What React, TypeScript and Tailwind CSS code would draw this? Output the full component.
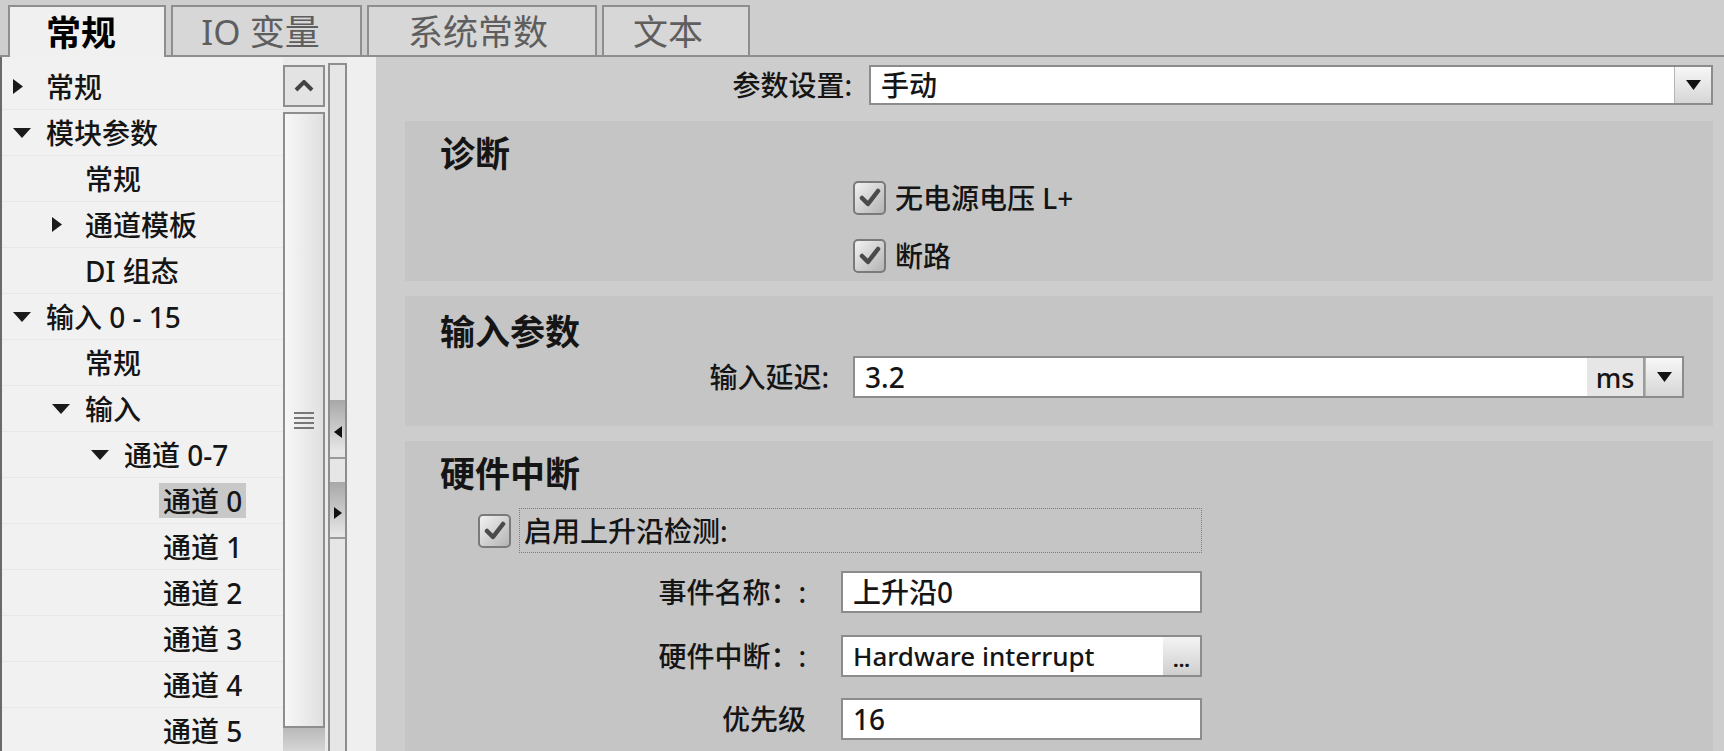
import React from 'react';

const TriDown = () => (
  <svg width="18" height="10" viewBox="0 0 18 10" className="shrink-0">
    <path d="M0 0H18L9 10Z" fill="#1a1a1a" />
  </svg>
);

const TriRight = () => (
  <svg width="10" height="15" viewBox="0 0 10 15" className="shrink-0">
    <path d="M0 0L10 7.5L0 15Z" fill="#1a1a1a" />
  </svg>
);

const Check = () => (
  <div className="w-[33px] h-[34px] rounded-[5px] border-2 border-[#7a7a7a] bg-linear-to-br from-[#f2f2f2] to-[#b4b4b4] flex items-center justify-center shrink-0">
    <svg width="22" height="20" viewBox="0 0 22 20">
      <path d="M3 10 L9 16 L19 3" stroke="#4a4a4a" strokeWidth="4.5" fill="none" strokeLinecap="round" strokeLinejoin="round" />
    </svg>
  </div>
);

const DropBtn = () => (
  <div className="w-[37px] h-full bg-linear-to-b from-[#f7f7f7] to-[#d6d6d6] border-l border-[#b5b5b5] flex items-center justify-center shrink-0">
    <svg width="15" height="10" viewBox="0 0 15 10">
      <path d="M0 0H15L7.5 10Z" fill="#111" />
    </svg>
  </div>
);

type Row = { level: number; arrow?: 'down' | 'right'; text: string; sel?: boolean };

const rows: Row[] = [
  { level: 0, arrow: 'right', text: '常规' },
  { level: 0, arrow: 'down', text: '模块参数' },
  { level: 1, text: '常规' },
  { level: 1, arrow: 'right', text: '通道模板' },
  { level: 1, text: 'DI 组态' },
  { level: 0, arrow: 'down', text: '输入 0 - 15' },
  { level: 1, text: '常规' },
  { level: 1, arrow: 'down', text: '输入' },
  { level: 2, arrow: 'down', text: '通道 0-7' },
  { level: 3, text: '通道 0', sel: true },
  { level: 3, text: '通道 1' },
  { level: 3, text: '通道 2' },
  { level: 3, text: '通道 3' },
  { level: 3, text: '通道 4' },
  { level: 3, text: '通道 5' },
];

const indentPad = ['pl-[6px]', 'pl-[45px]', 'pl-[84px]', 'pl-[123px]'];

export default function App() {
  return (
    <div className="w-[1724px] h-[751px] overflow-hidden bg-[#cdcdcd] text-[#151515] font-['Noto_Sans','Noto_Sans_CJK_SC',sans-serif] flex flex-col">
      {/* Tab strip */}
      <div className="h-[57px] shrink-0 bg-[#cecece] border-b-2 border-[#8e8e8e] flex items-end gap-[5px] pl-[8px]">
        <div className="w-[158px] h-[52px] -mb-[2px] relative z-10 bg-[#f0f0f0] border-2 border-b-0 border-[#8e8e8e] flex items-center justify-center pr-[12px] text-[35px] leading-none font-bold text-black">
          常规
        </div>
        <div className="w-[191px] h-[50px] bg-[#d7d7d7] border-2 border-b-0 border-[#8e8e8e] flex items-center justify-center pr-[12px] text-[35px] leading-none text-[#5e5e5e]">
          IO 变量
        </div>
        <div className="w-[230px] h-[50px] bg-[#d7d7d7] border-2 border-b-0 border-[#8e8e8e] flex items-center justify-center pr-[8px] text-[35px] leading-none text-[#5e5e5e]">
          系统常数
        </div>
        <div className="w-[148px] h-[50px] bg-[#d7d7d7] border-2 border-b-0 border-[#8e8e8e] flex items-center justify-center pr-[16px] text-[35px] leading-none text-[#5e5e5e]">
          文本
        </div>
      </div>

      {/* Body */}
      <div className="flex flex-1 min-h-0">
        {/* Tree */}
        <div className="w-[283px] shrink-0 bg-[#f1f1f1] border-l-2 border-[#6a6a6a] pt-[7px]">
          {rows.map((r, i) => (
            <div
              key={i}
              className={`h-[46px] flex items-center border-b border-[#e7e7e7] text-[28px] leading-none font-medium ${indentPad[r.level]}`}
            >
              <div className="w-[38px] shrink-0 flex items-center pl-[5px]">
                {r.arrow === 'down' && <TriDown />}
                {r.arrow === 'right' && <TriRight />}
              </div>
              <span className={r.sel ? 'bg-[#c8c8c8] h-[35px] flex items-center px-[4px] -ml-[4px]' : ''}>{r.text}</span>
            </div>
          ))}
        </div>

        {/* Scrollbar */}
        <div className="w-[42px] shrink-0 bg-[#ebebeb] pt-[8px] flex flex-col">
          <div className="h-[42px] shrink-0 border-2 border-[#8e8e8e] bg-[#e3e3e3] flex items-center justify-center">
            <svg width="20" height="12" viewBox="0 0 20 12">
              <polyline points="2,10 10,2 18,10" stroke="#444" strokeWidth="4" fill="none" />
            </svg>
          </div>
          <div className="h-[616px] shrink-0 mt-[5px] border-2 border-[#8e8e8e] bg-linear-to-r from-[#f7f7f7] to-[#e0e0e0] flex items-center justify-center">
            <div className="flex flex-col gap-[3px] w-[20px]">
              <div className="h-[2px] bg-[#777]" />
              <div className="h-[2px] bg-[#777]" />
              <div className="h-[2px] bg-[#777]" />
              <div className="h-[2px] bg-[#777]" />
            </div>
          </div>
          <div className="flex-1 bg-linear-to-b from-[#b9b9b9] to-[#d6d6d6]" />
        </div>

        {/* Splitter */}
        <div className="w-[3px] shrink-0 bg-[#ebebeb]" />
        <div className="w-[19px] shrink-0 bg-[#ebebeb] pt-[6px] flex flex-col">
          <div className="flex-1 border-2 border-b-0 border-[#8e8e8e] bg-[#e6e6e6] flex flex-col">
            <div className="h-[335px] shrink-0" />
            <div className="h-[52px] shrink-0 bg-linear-to-b from-[#a8a8a8] to-[#e8e8e8] flex items-end justify-center pb-[14px]">
              <svg width="8" height="12" viewBox="0 0 8 12">
                <path d="M8 0V12L0 6Z" fill="#111" />
              </svg>
            </div>
            <div className="h-[5px] shrink-0" />
            <div className="h-[2px] shrink-0 bg-[#9a9a9a]" />
            <div className="h-[23px] shrink-0" />
            <div className="h-[55px] shrink-0 bg-linear-to-b from-[#a8a8a8] to-[#e8e8e8] flex items-end justify-center pb-[18px]">
              <svg width="8" height="12" viewBox="0 0 8 12">
                <path d="M0 0V12L8 6Z" fill="#111" />
              </svg>
            </div>
            <div className="h-[2px] shrink-0 bg-[#9a9a9a]" />
          </div>
        </div>
        <div className="w-[29px] shrink-0 bg-[#efefef]" />

        {/* Content */}
        <div className="flex-1 bg-[#cdcdcd] pl-[29px] pr-[11px] text-[28px] leading-none font-medium">
          {/* Parameter setting */}
          <div className="mt-[8px] h-[40px] flex items-center">
            <div className="w-[447px] text-right">参数设置:</div>
            <div className="ml-[17px] flex-1 h-full bg-white border-2 border-[#8c8c8c] flex items-center">
              <div className="flex-1 pl-[10px]">手动</div>
              <DropBtn />
            </div>
          </div>

          {/* 诊断 */}
          <div className="mt-[16px] h-[160px] bg-[#c5c5c5] pt-[14px]">
            <div className="pl-[35px] h-[36px] flex items-center text-[35px] font-bold">诊断</div>
            <div className="mt-[7px] h-[40px] pl-[448px] flex items-center">
              <Check />
              <span className="ml-[9px]">无电源电压 L+</span>
            </div>
            <div className="mt-[18px] h-[40px] pl-[448px] flex items-center">
              <Check />
              <span className="ml-[9px]">断路</span>
            </div>
          </div>

          {/* 输入参数 */}
          <div className="mt-[15px] h-[130px] bg-[#c5c5c5] pt-[17px]">
            <div className="pl-[35px] h-[36px] flex items-center text-[35px] font-bold">输入参数</div>
            <div className="mt-[7px] h-[42px] flex items-center">
              <div className="w-[424px] text-right">输入延迟:</div>
              <div className="ml-[24px] mr-[29px] flex-1 h-full bg-white border-2 border-[#8c8c8c] flex items-center">
                <div className="flex-1 pl-[10px]">3.2</div>
                <div className="w-[56px] h-full bg-[#e6e6e6] flex items-center justify-center text-[27px]">ms</div>
                <div className="w-[2px] h-full bg-[#9c9c9c]" />
                <DropBtn />
              </div>
            </div>
          </div>

          {/* 硬件中断 */}
          <div className="mt-[15px] h-[320px] bg-[#c5c5c5] pt-[14px]">
            <div className="pl-[35px] h-[36px] flex items-center text-[35px] font-bold">硬件中断</div>
            <div className="mt-[17px] h-[45px] pl-[73px] flex items-center">
              <Check />
              <div className="ml-[8px] w-[683px] h-full border border-dotted border-[#7d7d7d] flex items-center pl-[4px]">
                启用上升沿检测:
              </div>
            </div>
            <div className="mt-[18px] h-[42px] flex items-center">
              <div className="w-[401px] text-right">事件名称：:</div>
              <div className="ml-[35px] w-[361px] h-full bg-white border-2 border-[#8c8c8c] flex items-center pl-[10px]">上升沿0</div>
            </div>
            <div className="mt-[22px] h-[42px] flex items-center">
              <div className="w-[401px] text-right">硬件中断：:</div>
              <div className="ml-[35px] w-[361px] h-full bg-white border-2 border-[#8c8c8c] flex items-center">
                <div className="flex-1 pl-[10px] text-[26px]">Hardware interrupt</div>
                <div className="w-[37px] h-full bg-linear-to-b from-[#f4f4f4] to-[#cfcfcf] flex items-end justify-center pb-[5px] text-[20px] font-bold leading-none">...</div>
              </div>
            </div>
            <div className="mt-[21px] h-[42px] flex items-center">
              <div className="w-[401px] text-right">优先级</div>
              <div className="ml-[35px] w-[361px] h-full bg-white border-2 border-[#8c8c8c] flex items-center pl-[10px]">16</div>
            </div>
          </div>
        </div>
      </div>
    </div>
  );
}
